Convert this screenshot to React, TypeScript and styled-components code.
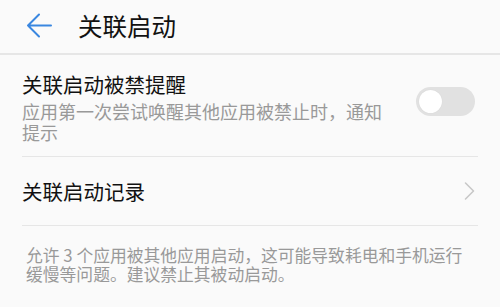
import React, { useState } from 'react';
import styled, { createGlobalStyle } from 'styled-components';

const GlobalStyle = createGlobalStyle`
    html, body {
        margin: 0;
        padding: 0;
        background: #fafafa;
    }
    body {
        font-family: "Noto Sans CJK SC", "Noto Sans", sans-serif;
        color: #1a1a1a;
    }
`;

const Page = styled.div`
    width: 500px;
    height: 307px;
    overflow: hidden;
    background: #fafafa;
`;

const Header = styled.div`
    height: 53px;
    display: flex;
    align-items: center;
    padding-left: 25px;
    border-bottom: 2px solid #e6e6e6;
`;

const BackButton = styled.div`
    width: 27px;
    height: 26px;
    display: flex;
    align-items: center;
    justify-content: center;
    margin-right: 26px;
    margin-top: -2px;
`;

const Title = styled.h1`
    margin: 0;
    font-size: 24.5px;
    font-weight: 400;
    line-height: 1;
    color: #111;
`;

const List = styled.div`
    padding: 0 22px;
`;

const Row = styled.div<{ $height?: number }>`
    display: flex;
    align-items: center;
    justify-content: space-between;
    border-bottom: 1px solid #e6e6e6;
    min-height: ${p => (p.$height ? `${p.$height}px` : 'auto')};
`;

const RowText = styled.div`
    flex: 1;
    max-width: 375px;
    padding: 15px 0 13px;
`;

const RowTitle = styled.div`
    font-size: 20.5px;
    line-height: 28px;
    color: #111;
`;

const RowSub = styled.div`
    margin-top: 3px;
    font-size: 18px;
    line-height: 21px;
    color: #999;
`;

const Toggle = styled.div<{ $on: boolean }>`
    width: 59px;
    height: 29px;
    border-radius: 15px;
    background: ${p => (p.$on ? '#3a87e0' : '#e1e1e1')};
    position: relative;
    margin-right: 3px;
    margin-top: -8px;
    cursor: pointer;
`;

const Knob = styled.div<{ $on: boolean }>`
    position: absolute;
    top: 3px;
    left: ${p => (p.$on ? '33px' : '3px')};
    width: 23px;
    height: 23px;
    border-radius: 50%;
    background: #ffffff;
    box-shadow: 0 0 1px rgba(0, 0, 0, 0.1);
`;

const Chevron = styled.div`
    width: 14px;
    display: flex;
    justify-content: center;
    margin-right: 2px;
`;

const Footer = styled.div`
    padding: 20px 24px 0 26px;
    font-size: 16.8px;
    line-height: 19px;
    color: #999;
`;

const App: React.FC = () => {
    const [notify, setNotify] = useState<boolean>(false);

    return (
        <Page>
            <GlobalStyle />
            <Header>
                <BackButton>
                    <svg width="26" height="25" viewBox="0 0 26 25" fill="none">
                        <path d="M25 12.5H2M13 1.5L2 12.5L13 23.5" stroke="#3a87e0" strokeWidth="2" strokeLinecap="round" strokeLinejoin="round" />
                    </svg>
                </BackButton>
                <Title>关联启动</Title>
            </Header>
            <List>
                <Row>
                    <RowText>
                        <RowTitle>关联启动被禁提醒</RowTitle>
                        <RowSub>应用第一次尝试唤醒其他应用被禁止时，通知提示</RowSub>
                    </RowText>
                    <Toggle $on={notify} onClick={() => setNotify(!notify)}>
                        <Knob $on={notify} />
                    </Toggle>
                </Row>
                <Row $height={68}>
                    <RowTitle>关联启动记录</RowTitle>
                    <Chevron>
                        <svg width="11" height="18" viewBox="0 0 11 18" fill="none">
                            <path d="M1.5 1L9.5 9L1.5 17" stroke="#c6c6c6" strokeWidth="1.5" strokeLinecap="round" strokeLinejoin="round" />
                        </svg>
                    </Chevron>
                </Row>
            </List>
            <Footer>允许 3 个应用被其他应用启动，这可能导致耗电和手机运行缓慢等问题。建议禁止其被动启动。</Footer>
        </Page>
    );
};

export default App;
